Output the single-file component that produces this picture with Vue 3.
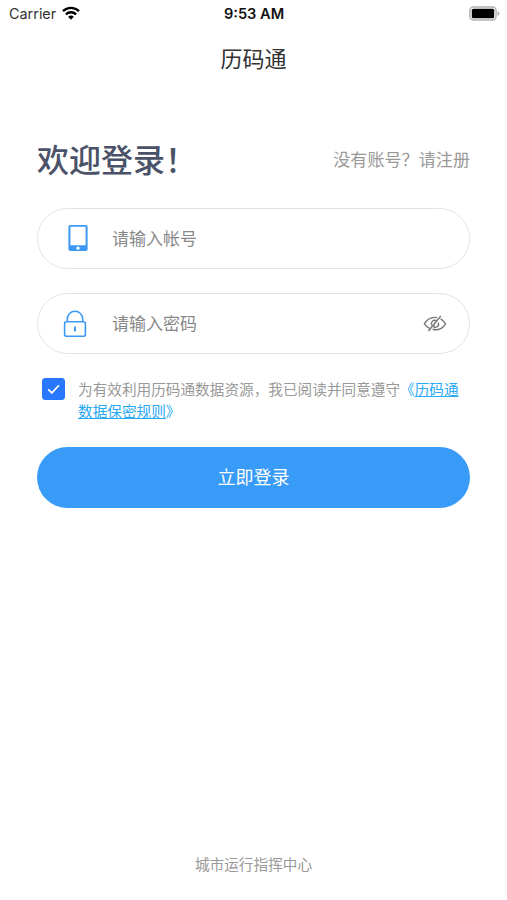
<template>
  <div class="login-page">
    <header class="status-bar">
      <div class="status-left">
        <span class="carrier">Carrier</span>
        <svg class="wifi-icon" viewBox="0 0 18 14">
          <path d="M1 5.1a11.6 11.6 0 0 1 16 0" />
          <path d="M3.9 8.3a7.4 7.4 0 0 1 10.2 0" />
          <path class="wifi-dot" d="M6.1 10.8a4.4 4.4 0 0 1 5.8 0L9 13.7z" />
        </svg>
      </div>
      <div class="status-time">9:53 AM</div>
      <svg class="battery-icon" viewBox="0 0 31 15">
        <rect x="0.9" y="0.9" width="26.2" height="13.2" rx="3.8" fill="#fff" stroke="#b0b0b0" stroke-width="1.5" />
        <rect x="2.8" y="2.8" width="22.4" height="9.4" rx="1.5" fill="#000" />
        <path d="M28.6 5.2c2.4.7 2.4 3.9 0 4.6z" fill="#aaa" />
      </svg>
    </header>

    <h1 class="nav-title">历码通</h1>

    <main class="login-form">
      <div class="welcome-row">
        <h2 class="welcome">欢迎登录！</h2>
        <a class="register">没有账号？请注册</a>
      </div>

      <div class="field">
        <svg class="field-icon account-icon" viewBox="0 0 26 28">
          <path
            fill="#3b99f5"
            fill-rule="evenodd"
            d="M5.4 1h15.2a2 2 0 0 1 2 2v22a2 2 0 0 1-2 2H5.4a2 2 0 0 1-2-2V3a2 2 0 0 1 2-2zm0 1.8v18.5h15.2V2.8z"
          />
          <circle cx="13" cy="24.2" r="1.6" fill="#fff" />
        </svg>
        <input v-model="account" class="field-input" type="text" placeholder="请输入帐号" />
      </div>

      <div class="field">
        <svg class="field-icon lock-icon" viewBox="0 0 26 28">
          <rect x="2.6" y="11.7" width="20.8" height="14.6" rx="2" />
          <path d="M5.3 11.7V9a7.7 7.7 0 0 1 15.4 0v2.7" />
          <path d="M13 16.5v4.8" stroke-width="2" />
        </svg>
        <input
          v-model="password"
          class="field-input"
          :type="showPassword ? 'text' : 'password'"
          placeholder="请输入密码"
        />
        <button class="eye-button" type="button" @click="showPassword = !showPassword">
          <svg class="eye-icon" viewBox="0 0 24 18">
            <path d="M14 2.6C8.4 1.6 4 4.4 1.4 8.8c1.5 2.3 3.3 3.9 5.6 4.9" />
            <path d="M17.6 3.8c2.1 1.1 3.7 2.7 5 5-3 4.6-7.8 6.9-13 5.5" />
            <path d="M13.3 5.5a3.6 3.6 0 0 0-4.6 4.9" />
            <path d="M15.4 7.5a3.6 3.6 0 0 1-4.4 4.7v-2.4" />
            <path d="M17.8 1 5.4 16" />
          </svg>
        </button>
      </div>

      <div class="agreement">
        <button class="checkbox" :class="{ checked: agreed }" type="button" @click="agreed = !agreed">
          <svg v-if="agreed" class="check-icon" viewBox="0 0 22 22">
            <path d="M5.2 11.3l4 4 7.8-8.4" />
          </svg>
        </button>
        <p class="agreement-text">
          为有效利用历码通数据资源，我已阅读并同意遵守<span class="rules">《<a class="rules-link">历码通数据保密规则</a>》</span>
        </p>
      </div>

      <button class="submit" type="button">立即登录</button>
    </main>

    <footer class="footer">城市运行指挥中心</footer>
  </div>
</template>

<script setup>
import { ref } from 'vue'

const account = ref('')
const password = ref('')
const showPassword = ref(false)
const agreed = ref(true)
</script>

<style>
body {
  background: #fff;
}
</style>

<style scoped>
.login-page {
  display: flex;
  flex-direction: column;
  height: 900px;
  box-sizing: border-box;
  background: #fff;
  font-family: 'Noto Sans CJK SC', sans-serif;
}

button {
  padding: 0;
  border: none;
  background: none;
  font-family: inherit;
  cursor: pointer;
}

/* Status bar */
.status-bar {
  display: grid;
  grid-template-columns: 1fr auto 1fr;
  align-items: center;
  height: 27px;
  padding: 0 7px 0 9px;
  font-family: Inter, sans-serif;
  font-size: 14.4px;
  color: #111;
}

.status-left {
  display: flex;
  align-items: center;
  gap: 6px;
}

.carrier {
  color: #333;
}

.wifi-icon {
  width: 18px;
  height: 14px;
  margin-top: -1px;
  fill: none;
  stroke: #000;
  stroke-width: 2.4;
}

.wifi-icon .wifi-dot {
  fill: #000;
  stroke: none;
}

.status-time {
  margin-right: 1px;
  font-size: 14.6px;
  font-weight: 600;
}

.battery-icon {
  justify-self: end;
  width: 31px;
  height: 15px;
  margin-top: -1px;
}

.nav-title {
  margin: 14px 0 0;
  font-size: 22px;
  font-weight: 400;
  line-height: 32px;
  text-align: center;
  color: #333;
}

/* Form */
.login-form {
  display: flex;
  flex-direction: column;
  padding: 0 37px;
}

.welcome-row {
  display: flex;
  align-items: center;
  justify-content: space-between;
  height: 48px;
  margin: 61px 0 26px;
}

.welcome {
  margin: 0;
  font-size: 32px;
  font-weight: 500;
  line-height: 48px;
  color: #4a5268;
}

.register {
  font-size: 17.1px;
  color: #999;
}

.field {
  display: flex;
  align-items: center;
  height: 61px;
  box-sizing: border-box;
  margin-bottom: 24px;
  padding: 0 22px 0 24px;
  border: 1.5px solid #e3e3e3;
  border-radius: 31px;
}

.field-icon {
  flex: none;
  width: 26px;
  height: 28px;
  margin-right: 24px;
}

.account-icon {
  margin-top: -1px;
  margin-left: 3px;
  margin-right: 21px;
}

.lock-icon {
  fill: none;
  stroke: #3b99f5;
  stroke-width: 1.6;
}

.field-input {
  flex: 1;
  min-width: 0;
  padding: 0 0 2px;
  border: none;
  outline: none;
  background: transparent;
  font-family: inherit;
  font-size: 17px;
  line-height: 26px;
  color: #333;
}

.field-input::placeholder {
  color: #888;
  opacity: 1;
}

.eye-button {
  display: flex;
}

.eye-icon {
  width: 24px;
  height: 18px;
  fill: none;
  stroke: #777;
  stroke-width: 1.4;
}

.agreement {
  display: flex;
  align-items: flex-start;
  gap: 13px;
  padding-left: 5px;
}

.checkbox {
  display: flex;
  flex: none;
  width: 23px;
  height: 22px;
  box-sizing: border-box;
  border: 1px solid #bbb;
  border-radius: 3px;
}

.checkbox.checked {
  border-color: #2878ff;
  background: #2878ff;
}

.check-icon {
  flex: none;
  width: 21px;
  height: 20px;
  fill: none;
  stroke: #fff;
  stroke-width: 1.9;
}

.agreement-text {
  margin: 0;
  font-size: 14.65px;
  line-height: 22px;
  color: #999;
}

.rules {
  color: #29a9f3;
}

.rules-link {
  text-decoration: underline;
}

.submit {
  height: 61px;
  margin-top: 25px;
  padding-bottom: 3px;
  border-radius: 31px;
  background: #389bf8;
  font-size: 18px;
  color: #fff;
}

.footer {
  margin-top: auto;
  padding-bottom: 25px;
  font-size: 14.65px;
  line-height: 22px;
  text-align: center;
  color: #999;
}
</style>
